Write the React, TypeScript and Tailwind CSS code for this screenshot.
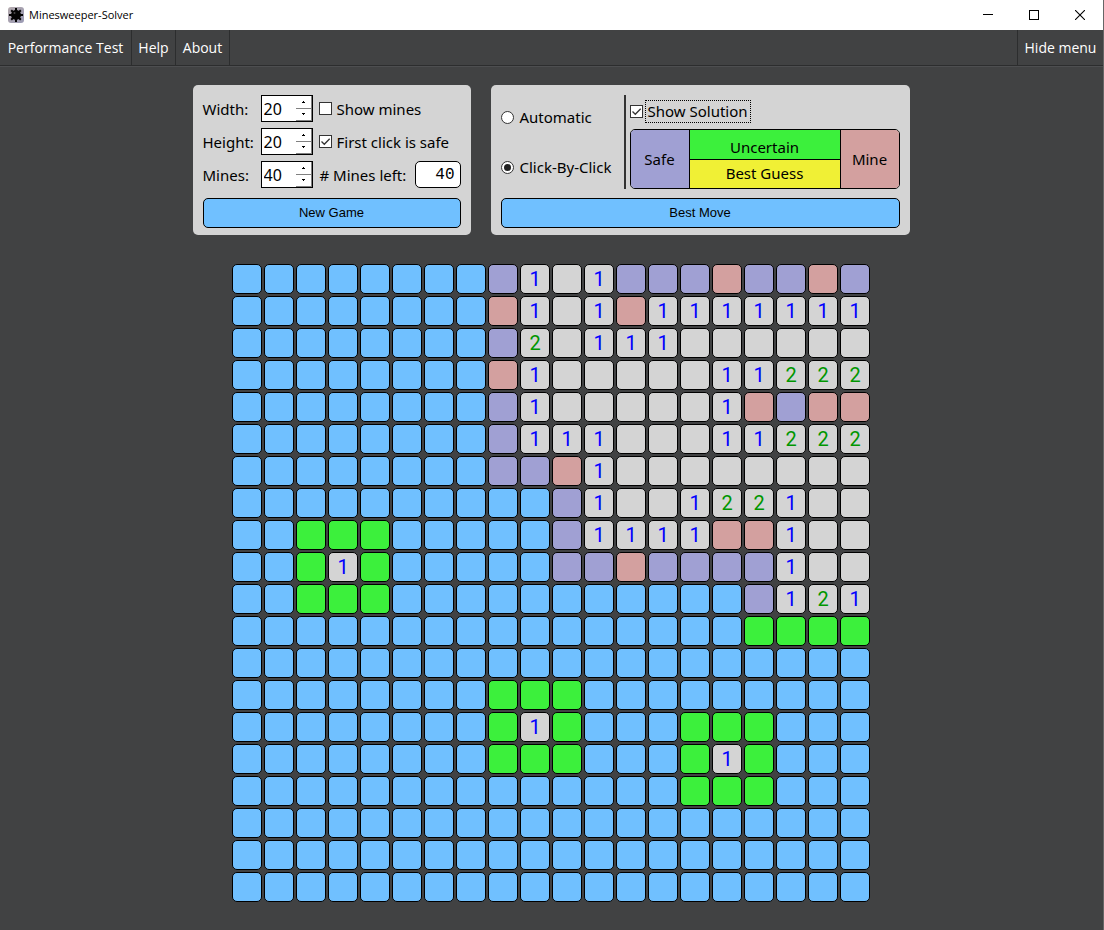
import React, { useState } from "react";

const ROWS = [
  "bbbbbbbbs101sssmssms",
  "bbbbbbbbm101m1111111",
  "bbbbbbbbs20111000000",
  "bbbbbbbbm10000011222",
  "bbbbbbbbs1000001msmm",
  "bbbbbbbbs11100011222",
  "bbbbbbbbssm100000000",
  "bbbbbbbbbbs100122100",
  "bbgggbbbbbs1111mm100",
  "bbg1gbbbbbssmssss100",
  "bbgggbbbbbbbbbbbs121",
  "bbbbbbbbbbbbbbbbgggg",
  "bbbbbbbbbbbbbbbbbbbb",
  "bbbbbbbbgggbbbbbbbbb",
  "bbbbbbbbg1gbbbgggbbb",
  "bbbbbbbbgggbbbg1gbbb",
  "bbbbbbbbbbbbbbgggbbb",
  "bbbbbbbbbbbbbbbbbbbb",
  "bbbbbbbbbbbbbbbbbbbb",
  "bbbbbbbbbbbbbbbbbbbb",
];

const CELL_STYLES: Record<string, string> = {
  b: "bg-[#70c0ff]",
  s: "bg-[#a0a0d3]",
  m: "bg-[#d3a09f]",
  g: "bg-[#3cf03c]",
  "0": "bg-[#d4d4d4]",
  "1": "bg-[#d4d4d4] text-[#0000ff]",
  "2": "bg-[#d4d4d4] text-[#009600]",
};

const CELL_NAMES: Record<string, string> = {
  b: "Covered",
  s: "Safe",
  m: "Mine",
  g: "Uncertain",
  "0": "Empty",
};

function MineIcon() {
  return (
    <svg width="16" height="16" viewBox="0 0 16 16" aria-hidden="true">
      <defs>
        <linearGradient id="tile" x1="0" y1="0" x2="1" y2="1">
          <stop offset="0" stopColor="#b3a9ad" />
          <stop offset="1" stopColor="#9a9ab4" />
        </linearGradient>
      </defs>
      <rect width="16" height="16" rx="3" fill="url(#tile)" />
      <circle cx="8" cy="8" r="5" fill="#050505" />
      <path
        d="M8 1v14M1 8h14M3.200 3.200l9.600 9.600M12.800 3.200l-9.600 9.600"
        stroke="#050505"
        strokeWidth="2"
      />
      <circle cx="6.500" cy="6" r="1" fill="#4a4a4a" />
    </svg>
  );
}

function TitleBar() {
  return (
    <header className="flex h-[30px] items-center bg-white pl-2 text-black">
      <MineIcon />
      <h1 className="ml-[5px] flex-1 font-['Open_Sans',sans-serif] text-[11px]">Minesweeper-Solver</h1>
      <div className="flex">
        <button aria-label="Minimize" className="flex h-[30px] w-[46px] items-center justify-center">
          <svg width="10" height="10" viewBox="0 0 10 10" fill="none" stroke="black" shapeRendering="crispEdges">
            <path d="M0 4.500h10" />
          </svg>
        </button>
        <button aria-label="Maximize" className="flex h-[30px] w-[46px] items-center justify-center">
          <svg width="10" height="10" viewBox="0 0 10 10" fill="none" stroke="black" shapeRendering="crispEdges">
            <path d="M.5.5h9v9h-9z" />
          </svg>
        </button>
        <button aria-label="Close" className="flex h-[30px] w-[46px] items-center justify-center">
          <svg width="10" height="10" viewBox="0 0 10 10" fill="none" stroke="black" strokeWidth="1.100">
            <path d="M0 0l10 10M10 0L0 10" />
          </svg>
        </button>
      </div>
    </header>
  );
}

function MenuBar() {
  const item = "h-[35px] whitespace-nowrap border-[#2c2d2e] text-center";
  return (
    <nav className="flex h-9 border-b border-[#2c2d2e] font-['Open_Sans',sans-serif] text-[14px] text-white shadow-[0_1px_0_#4d4e50]">
      <button className={`${item} w-[132px] border-r`}>Performance Test</button>
      <button className={`${item} w-[44px] border-r`}>Help</button>
      <button className={`${item} w-[54px] border-r`}>About</button>
      <button className={`${item} ml-auto w-[86px] border-l`}>Hide menu</button>
    </nav>
  );
}

function SpinBox({ id, initial }: { id: string; initial: number }) {
  const [value, setValue] = useState(initial);
  const step = "flex flex-1 items-center justify-center border-b border-r border-[#808080]";
  return (
    <div className="flex h-[27px] w-[52px] border border-black bg-white">
      <input
        id={id}
        type="text"
        inputMode="numeric"
        value={value}
        onChange={(e) => setValue(Number(e.target.value) || 0)}
        className="w-[34px] min-w-0 bg-white pl-[2px] text-[16px] outline-none"
      />
      <div className="flex flex-1 flex-col">
        <button aria-label="Increase" className={step} onClick={() => setValue(value + 1)}>
          <svg width="3" height="2" viewBox="0 0 3 2" shapeRendering="crispEdges">
            <path d="M1 0h1v1h1v1H0V1h1z" />
          </svg>
        </button>
        <button aria-label="Decrease" className={step} onClick={() => setValue(value - 1)}>
          <svg width="3" height="2" viewBox="0 0 3 2" shapeRendering="crispEdges">
            <path d="M0 0h3v1H2v1H1V1H0z" />
          </svg>
        </button>
      </div>
    </div>
  );
}

function CheckBox({ label, checked = false, focused = false }: { label: string; checked?: boolean; focused?: boolean }) {
  return (
    <label className="flex items-center gap-[2px]">
      <span className="grid size-[13px] shrink-0">
        <input
          type="checkbox"
          defaultChecked={checked}
          className="peer col-start-1 row-start-1 size-[13px] appearance-none border border-[#333] bg-white"
        />
        <svg
          viewBox="0 0 13 13"
          className="pointer-events-none invisible col-start-1 row-start-1 size-[13px] peer-checked:visible"
          fill="none"
          stroke="#333"
          strokeWidth="1.300"
        >
          <path d="M2.500 6.500l2.800 2.800 5.400-5.600" />
        </svg>
      </span>
      <span className={focused ? "border border-dotted border-black px-[2px] leading-[21px]" : "px-[3px]"}>{label}</span>
    </label>
  );
}

function Radio({ label, checked = false }: { label: string; checked?: boolean }) {
  return (
    <label className="flex items-center gap-[6px]">
      <span className="grid size-[13px] shrink-0">
        <input
          type="radio"
          name="mode"
          defaultChecked={checked}
          className="peer col-start-1 row-start-1 size-[13px] appearance-none rounded-full border border-[#333] bg-white"
        />
        <span className="pointer-events-none invisible col-start-1 row-start-1 size-[7px] place-self-center rounded-full bg-[#222] peer-checked:visible" />
      </span>
      {label}
    </label>
  );
}

const panel = "flex flex-col justify-between rounded-[5px] bg-[#d4d4d4] px-[10px] pb-[7px] pt-[10px]";
const action =
  "h-[30px] w-full rounded-[5px] border border-black bg-[#70c0ff] font-['Liberation_Sans',sans-serif] text-[13px]";

function GamePanel() {
  return (
    <section className={`${panel} w-[278px]`}>
      <div className="flex flex-col gap-[6px]">
        <div className="flex h-[27px] items-center">
          <label htmlFor="width" className="w-[58px]">Width:</label>
          <SpinBox id="width" initial={20} />
          <div className="ml-[6px]"><CheckBox label="Show mines" /></div>
        </div>
        <div className="flex h-[27px] items-center">
          <label htmlFor="height" className="w-[58px]">Height:</label>
          <SpinBox id="height" initial={20} />
          <div className="ml-[6px]"><CheckBox label="First click is safe" checked /></div>
        </div>
        <div className="flex h-[27px] items-center">
          <label htmlFor="mines" className="w-[58px]">Mines:</label>
          <SpinBox id="mines" initial={40} />
          <span className="ml-[7px] whitespace-nowrap"># Mines left:</span>
          <output className="ml-auto h-[27px] w-[46px] rounded-[5px] border border-black bg-white pr-[5px] text-right font-['Liberation_Mono',monospace] text-[16px] leading-[27px]">
            40
          </output>
        </div>
      </div>
      <button className={action}>New Game</button>
    </section>
  );
}

function SolverPanel() {
  return (
    <section className={`${panel} w-[419px]`}>
      <div className="flex h-[94px]">
        <div className="flex w-[123px] flex-col justify-between py-3">
          <Radio label="Automatic" />
          <Radio label="Click-By-Click" checked />
        </div>
        <div className="w-[2px] bg-[#333]" />
        <div className="flex flex-1 flex-col justify-between pl-1 pt-[5px]">
          <CheckBox label="Show Solution" checked focused />
          <div className="grid h-[60px] grid-cols-[58px_1fr_58px] overflow-hidden rounded-[5px] border border-black">
            <div className="flex items-center justify-center bg-[#a0a0d3]">Safe</div>
            <div className="grid grid-rows-[30px_28px] border-x border-black text-center">
              <div className="border-b border-black bg-[#3cf03c] pt-[5px] leading-[24px]">Uncertain</div>
              <div className="bg-[#f0f035] leading-[26px]">Best Guess</div>
            </div>
            <div className="flex items-center justify-center bg-[#d3a09f]">Mine</div>
          </div>
        </div>
      </div>
      <button className={action}>Best Move</button>
    </section>
  );
}

function Board() {
  return (
    <div className="mt-[29px] grid grid-cols-[repeat(20,30px)] gap-[2px] font-['Roboto',sans-serif] text-[20px]">
      {ROWS.flatMap((row, y) =>
        row.split("").map((cell, x) => (
          <button
            key={`${x}-${y}`}
            aria-label={CELL_NAMES[cell]}
            className={`flex size-[30px] items-center justify-center rounded-[5px] border border-black leading-none ${CELL_STYLES[cell]}`}
          >
            {cell === "1" || cell === "2" ? cell : null}
          </button>
        ))
      )}
    </div>
  );
}

export default function App() {
  return (
    <div className="min-h-screen border-r border-[#666] bg-[#414243] font-['Noto_Sans',sans-serif] text-[15px] leading-[20px] text-black">
      <TitleBar />
      <MenuBar />
      <main className="flex flex-col items-center pr-px pt-[19px]">
        <div className="flex h-[150px] gap-5">
          <GamePanel />
          <SolverPanel />
        </div>
        <Board />
      </main>
    </div>
  );
}
